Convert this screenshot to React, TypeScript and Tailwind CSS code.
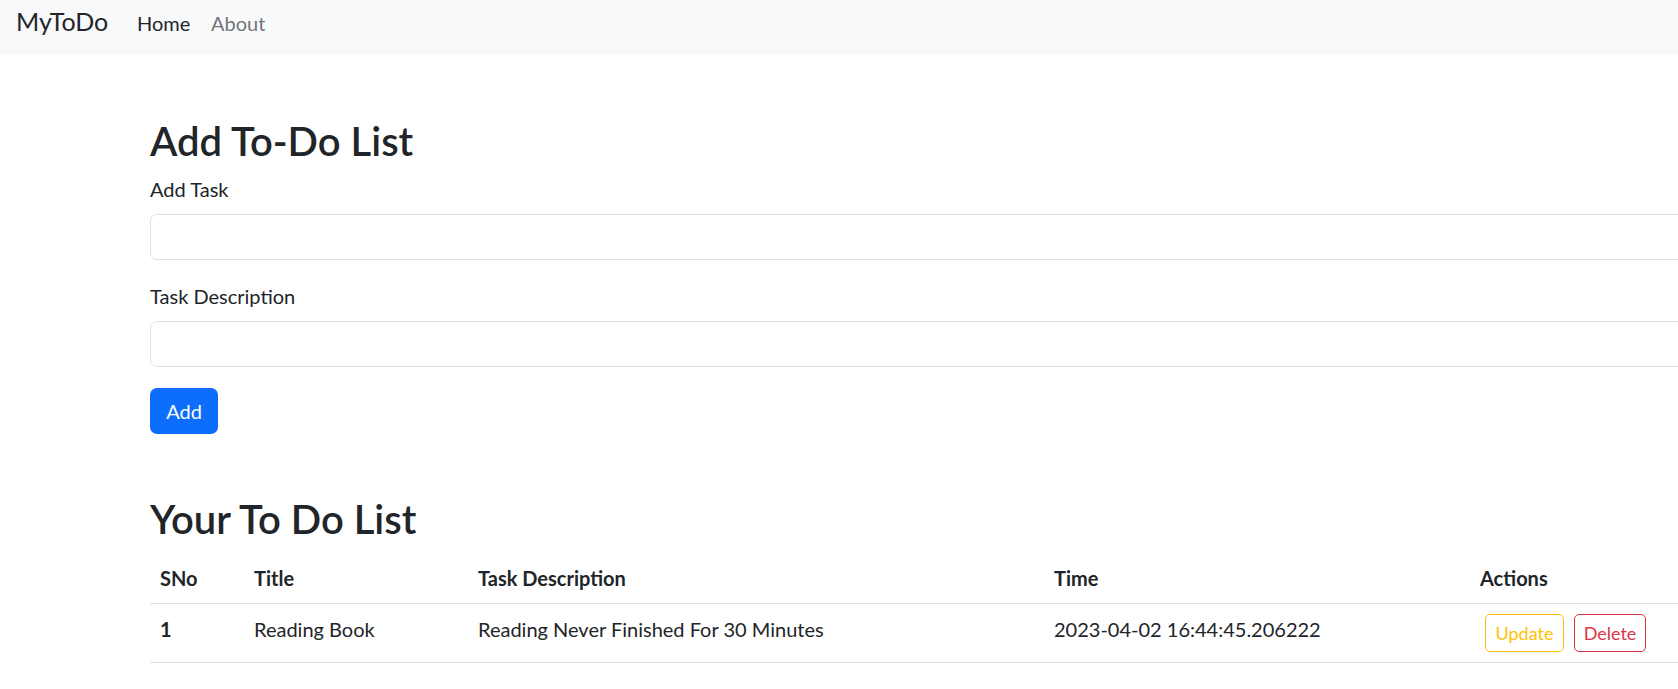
import React from "react";

const font = "font-['Lato','Liberation_Sans',sans-serif]";

const todos = [
  {
    sno: 1,
    title: "Reading Book",
    desc: "Reading Never Finished For 30 Minutes",
    time: "2023-04-02 16:44:45.206222",
  },
];

export default function App() {
  return (
    <div className={`min-h-screen w-full overflow-hidden bg-white text-[#212529] ${font}`}>
      {/* Navbar */}
      <nav className="flex h-[55px] items-baseline bg-[#f8f9fa] pl-[16px] pt-[6px]">
        <a className="w-[121px] text-[25px] leading-[30px] text-[#212529]">MyToDo</a>
        <a className="w-[74px] text-[20px] leading-[24px] text-[#212529]">Home</a>
        <a className="text-[20px] leading-[24px] text-[rgba(33,37,41,0.65)]">About</a>
      </nav>

      <main className="ml-[150px] w-[1650px] pt-[62px]">
        <h1 className="text-[40px] font-semibold leading-[48px]">Add To-Do List</h1>

        <form className="flex flex-col">
          <label className="mt-[9px] text-[20px] leading-[30px]">Add Task</label>
          <input
            type="text"
            className="mt-[10px] h-[46px] w-full rounded-[7px] border border-[#dee2e6] px-[15px] text-[20px] outline-none"
          />
          <label className="mt-[21px] text-[20px] leading-[30px]">Task Description</label>
          <input
            type="text"
            className="mt-[10px] h-[46px] w-full rounded-[7px] border border-[#dee2e6] px-[15px] text-[20px] outline-none"
          />
          <div className="mt-[21px]">
            <button
              type="button"
              className="h-[46px] w-[68px] rounded-[7px] bg-[#0d6efd] text-[20px] leading-[30px] text-white"
            >
              Add
            </button>
          </div>
        </form>

        <h2 className="mt-[61px] text-[40px] font-semibold leading-[48px]">Your To Do List</h2>

        <table className="mt-[10px] w-full table-fixed border-collapse text-left text-[20px] leading-[30px]">
          <colgroup>
            <col className="w-[94px]" />
            <col className="w-[224px]" />
            <col className="w-[576px]" />
            <col className="w-[426px]" />
            <col />
          </colgroup>
          <thead>
            <tr className="border-b border-[#dee2e6]">
              <th className="px-[10px] py-[10px] align-top font-bold">SNo</th>
              <th className="px-[10px] py-[10px] align-top font-bold">Title</th>
              <th className="px-[10px] py-[10px] align-top font-bold">Task Description</th>
              <th className="px-[10px] py-[10px] align-top font-bold">Time</th>
              <th className="px-[10px] py-[10px] align-top font-bold">Actions</th>
            </tr>
          </thead>
          <tbody>
            {todos.map((t) => (
              <tr key={t.sno} className="border-b border-[#dee2e6]">
                <th className="px-[10px] py-[10px] align-top font-bold">{t.sno}</th>
                <td className="px-[10px] py-[10px] align-top">{t.title}</td>
                <td className="px-[10px] py-[10px] align-top">{t.desc}</td>
                <td className="px-[10px] py-[10px] align-top">{t.time}</td>
                <td className="px-[10px] py-[10px] align-top">
                  <div className="flex gap-[10px] pl-[5px]">
                    <button
                      type="button"
                      className="h-[38px] w-[79px] rounded-[5px] border border-[#ffc107] text-[18px] leading-[26px] text-[#ffc107]"
                    >
                      Update
                    </button>
                    <button
                      type="button"
                      className="h-[38px] w-[72px] rounded-[5px] border border-[#dc3545] text-[18px] leading-[26px] text-[#dc3545]"
                    >
                      Delete
                    </button>
                  </div>
                </td>
              </tr>
            ))}
          </tbody>
        </table>
      </main>
    </div>
  );
}
